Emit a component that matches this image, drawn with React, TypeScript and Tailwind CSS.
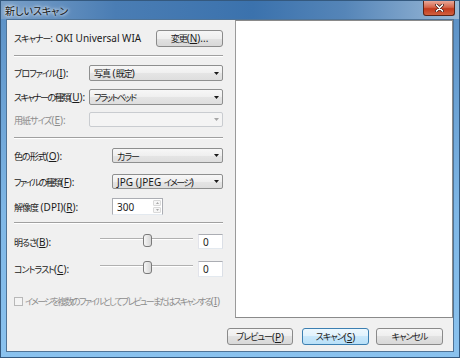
import type { ReactNode } from "react"

// underlined access key
function K({ children }: { children: ReactNode }) {
  return <span className="underline decoration-1 underline-offset-[1px]">{children}</span>
}

// japanese run, squeezed a bit to look like Meiryo UI
function J({ children, tight, tighter }: { children: ReactNode; tight?: boolean; tighter?: boolean }) {
  const track = tighter ? "tracking-[-1.8px]" : tight ? "tracking-[-1.6px]" : "tracking-[-1px]"
  return <span className={`text-[9px] ${track}`}>{children}</span>
}

function Button({ children, primary, className = "" }: { children: ReactNode; primary?: boolean; className?: string }) {
  return (
    <div
      className={`flex h-[17px] items-center justify-center rounded-[3px] border ${
        primary
          ? "border-[#3c7fb1] bg-[linear-gradient(#edf8fe,#e0f2fd_50%,#c9e8fb_50%,#b9e0f8)]"
          : "border-[#8a8a8a] bg-[linear-gradient(#f6f6f6,#eeeeee_50%,#e2e2e2_50%,#d8d8d8)]"
      } ${className}`}
    >
      {children}
    </div>
  )
}

function Combo({ value, disabled }: { value?: ReactNode; disabled?: boolean }) {
  return (
    <div
      className={`flex h-full flex-1 items-center rounded-[2px] border pl-[4px] pr-[3px] ${
        disabled
          ? "border-[#c9ccd0] bg-[#f4f4f4]"
          : "border-[#8e8f8f] bg-[linear-gradient(#f7f7f7,#efefef_50%,#e5e5e5_50%,#dedede)]"
      }`}
    >
      <span className="flex-1">{value}</span>
      <svg width="5" height="3" viewBox="0 0 5 3">
        <path d="M0 0h5L2.5 3z" fill={disabled ? "#a6a6a6" : "#1a1a1a"} />
      </svg>
    </div>
  )
}

function Separator({ className = "" }: { className?: string }) {
  return <div className={`h-[2px] border-t border-b border-t-[#a0a0a0] border-b-white ${className}`} />
}

function Slider() {
  return (
    <div className="relative h-full w-[93px]">
      <div className="absolute left-0 right-0 top-[4px] h-[2px] border-t border-b border-t-[#b0b0b0] border-b-white" />
      <svg className="absolute left-[43px] top-0" width="9" height="13" viewBox="0 0 9 13">
        <defs>
          <linearGradient id="thumb" x1="0" x2="1" y1="0" y2="0">
            <stop offset="0" stopColor="#f8f8f8" />
            <stop offset="1" stopColor="#d4d4d4" />
          </linearGradient>
        </defs>
        <rect x="0.5" y="0.5" width="8" height="12" rx="2.5" fill="url(#thumb)" stroke="#7a7a7a" />
      </svg>
    </div>
  )
}

function Edit({ value, className = "" }: { value: string; className?: string }) {
  return (
    <div className={`flex items-center border border-[#abadb3] border-b-[#e3e9ef] border-l-[#e2e3ea] border-r-[#dbdfe6] bg-white pl-[4px] ${className}`}>
      {value}
    </div>
  )
}

export default function App() {
  return (
    <div className="flex h-[358px] w-[460px] flex-col whitespace-nowrap border border-[#34597f] bg-[linear-gradient(#5a8fc4,#7fb7e6_60%,#8ac2ee)] font-['Noto_Sans','Noto_Sans_CJK_JP',sans-serif] text-[10px] leading-none text-[#1b1b1b] [font-feature-settings:'palt']">
      {/* title bar */}
      <div className="flex h-[18px] items-start justify-between bg-[linear-gradient(90deg,#7aa0c8,#4a7db4_25%,#3b72ad_55%,#5585b8_75%,#9ab9d7)]">
        <span className="pl-[4px] pt-[5px] font-['Noto_Sans_CJK_JP',sans-serif] text-[10px] text-[#141414] [text-shadow:0_0_5px_#fff,0_0_3px_#fff]">
          新しいスキャン
        </span>
        <div className="mr-[4px] flex h-[15px] w-[32px] items-center justify-center rounded-b-[3px] border border-t-0 border-[#5a2418] bg-[linear-gradient(#e9a899,#d5654b_45%,#c2391d_55%,#d0603f)]">
          <svg width="9" height="8" viewBox="0 0 9 8">
            <path d="M1.5 1l6 6M7.5 1l-6 6" stroke="#3a1410" strokeWidth="3" strokeLinecap="round" />
            <path d="M1.5 1l6 6M7.5 1l-6 6" stroke="#ffffff" strokeWidth="1.7" strokeLinecap="round" />
          </svg>
        </div>
      </div>

      {/* client */}
      <div className="mx-[5px] mb-[5px] flex flex-1 flex-col border border-[#4f7396] bg-[#f0f0f0]">
        <div className="flex h-[298px]">
          <div className="flex w-[222px] flex-col pl-[7px] pr-[6px] pt-[10px]">
            <div className="flex h-[16px] items-center justify-between">
              <span>
                <J>スキャナー</J>: OKI Universal WIA
              </span>
              <Button className="h-[15px] w-[67px]">
                <J>変更</J>(<K>N</K>)...
              </Button>
            </div>
            <Separator className="mt-[9px]" />

            <div className="mt-[8px] flex h-[16px] items-center">
              <span className="w-[75px]">
                <J>プロファイル</J>(<K>I</K>):
              </span>
              <Combo
                value={
                  <>
                    <J>写真</J> (<J>既定</J>)
                  </>
                }
              />
            </div>
            <div className="mt-[8px] flex h-[16px] items-center">
              <span className="w-[75px]">
                <J tight>スキャナーの種類</J>(<K>U</K>):
              </span>
              <Combo value={<J tight>フラットベッド</J>} />
            </div>
            <div className="mt-[7px] flex h-[15px] items-center">
              <span className="w-[75px] text-[#8d8d8d]">
                <J>用紙サイズ</J>(<K>E</K>):
              </span>
              <Combo disabled />
            </div>
            <Separator className="mt-[10px]" />

            <div className="mt-[9px] flex h-[15px] items-center">
              <span className="w-[98px]">
                <J>色の形式</J>(<K>O</K>):
              </span>
              <Combo value={<J>カラー</J>} />
            </div>
            <div className="mt-[11px] flex h-[15px] items-center">
              <span className="w-[98px]">
                <J tight>ファイルの種類</J>(<K>F</K>):
              </span>
              <Combo
                value={
                  <>
                    JPG (JPEG <J tight>イメージ</J>)
                  </>
                }
              />
            </div>
            <div className="mt-[9px] flex h-[17px] items-center">
              <span className="w-[98px]">
                <J>解像度</J> (DPI)(<K>R</K>):
              </span>
              <div className="flex h-full w-[51px] items-center border border-[#abadb3] border-b-[#e3e9ef] bg-white pl-[4px]">
                <span className="flex-1">300</span>
                <div className="flex h-full w-[10px] flex-col gap-px p-px">
                  <div className="flex flex-1 items-center justify-center rounded-[1px] border border-[#d9d9d9] bg-[#f6f6f6]">
                    <svg width="3" height="2" viewBox="0 0 3 2">
                      <path d="M0 2h3L1.5 0z" fill="#a8a8a8" />
                    </svg>
                  </div>
                  <div className="flex flex-1 items-center justify-center rounded-[1px] border border-[#d9d9d9] bg-[#f6f6f6]">
                    <svg width="3" height="2" viewBox="0 0 3 2">
                      <path d="M0 0h3L1.5 2z" fill="#a8a8a8" />
                    </svg>
                  </div>
                </div>
              </div>
            </div>
            <Separator className="mt-[7px]" />

            <div className="mt-[10px] flex h-[15px] items-center">
              <span className="w-[86px]">
                <J>明るさ</J>(<K>B</K>):
              </span>
              <Slider />
              <Edit value="0" className="ml-[5px] h-full flex-1" />
            </div>
            <div className="mt-[12px] flex h-[16px] items-center">
              <span className="w-[86px]">
                <J>コントラスト</J>(<K>C</K>):
              </span>
              <Slider />
              <Edit value="0" className="ml-[5px] h-full flex-1" />
            </div>

            <div className="mt-[19px] flex h-[10px] items-center text-[#8d8d8d]">
              <div className="h-[9px] w-[9px] border border-[#b8b8b8] bg-[#f4f4f4]" />
              <span className="ml-[2px]">
                <J tighter>イメージを複数のファイルとしてプレビューまたはスキャンする</J>(<K>I</K>)
              </span>
            </div>
          </div>

          <div className="ml-[6px] flex-1 border border-[#8a8a8a] border-l-[#9a9a9a] bg-white" />
        </div>

        <div className="flex justify-end pr-[10px] pt-[10px]">
          <Button className="w-[66px]">
            <J>プレビュー</J>(<K>P</K>)
          </Button>
          <Button primary className="ml-[9px] w-[67px]">
            <J>スキャン</J>(<K>S</K>)
          </Button>
          <Button className="ml-[7px] w-[67px]">
            <J>キャンセル</J>
          </Button>
        </div>
      </div>
    </div>
  )
}
